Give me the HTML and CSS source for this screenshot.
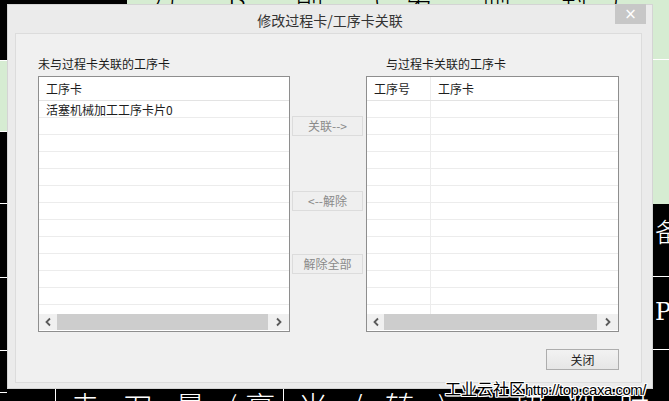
FILE: index.html
```html
<!DOCTYPE html>
<html lang="zh-CN">
<head>
<meta charset="utf-8">
<title>修改过程卡/工序卡关联</title>
<link rel="stylesheet" href="styles.css">
</head>
<body>
<div class="desk">
  <div class="cad-green"></div>
  <div class="cad-top-text">万 ß 削 (第 制 封) 备 / 以</div>
  <div class="cad-line h1"></div>
  <div class="cad-left-green"></div>
  <div class="cad-line lh1"></div>
  <div class="cad-line lh2"></div>
  <div class="cad-line lh3"></div>
  <div class="cad-line rh1"></div>
  <div class="cad-line rh2"></div>
  <div class="cad-line rh3"></div>
  <div class="cad-line v1"></div>
  <div class="cad-line v2"></div>
  <div class="cad-right-text t1">备</div>
  <div class="cad-right-text t2">Pa</div>
  <div class="cad-bottom-text">走 刀 量 (毫 米 / 转 )&nbsp;&nbsp;&nbsp; 切 削 时 间 ( 秒 ) 切 削</div>

  <div class="dialog">
    <div class="titlebar">
      <span class="title">修改过程卡/工序卡关联</span>
      <span class="close-x">×</span>
    </div>
    <div class="client">
      <div class="panes">
        <div class="pane">
          <div class="label">未与过程卡关联的工序卡</div>
          <div class="list">
            <div class="list-head"><div class="cell">工序卡</div></div>
            <div class="list-body">
              <div class="row"><div class="cell">活塞机械加工工序卡片0</div></div>
              <div class="row"></div><div class="row"></div><div class="row"></div>
              <div class="row"></div><div class="row"></div><div class="row"></div>
              <div class="row"></div><div class="row"></div><div class="row"></div>
              <div class="row"></div><div class="row"></div><div class="row"></div>
            </div>
            <div class="hscroll">
              <div class="arrow left"><svg width="8" height="10" viewBox="0 0 8 10"><polyline points="6,1.5 2.5,5 6,8.5" fill="none" stroke="#5a5a5a" stroke-width="1.8"/></svg></div>
              <div class="thumb"></div>
              <div class="arrow right"><svg width="8" height="10" viewBox="0 0 8 10"><polyline points="2,1.5 5.5,5 2,8.5" fill="none" stroke="#5a5a5a" stroke-width="1.8"/></svg></div>
            </div>
          </div>
        </div>

        <div class="actions">
          <div class="btn-dis b1">关联--&gt;</div>
          <div class="btn-dis b2">&lt;--解除</div>
          <div class="btn-dis b3">解除全部</div>
        </div>

        <div class="pane pane-right">
          <div class="label label-right">与过程卡关联的工序卡</div>
          <div class="list">
            <div class="list-head two"><div class="cell c1">工序号</div><div class="cell c2">工序卡</div></div>
            <div class="list-body">
              <div class="row two"><div class="cell c1"></div><div class="cell c2"></div></div>
              <div class="row two"><div class="cell c1"></div><div class="cell c2"></div></div>
              <div class="row two"><div class="cell c1"></div><div class="cell c2"></div></div>
              <div class="row two"><div class="cell c1"></div><div class="cell c2"></div></div>
              <div class="row two"><div class="cell c1"></div><div class="cell c2"></div></div>
              <div class="row two"><div class="cell c1"></div><div class="cell c2"></div></div>
              <div class="row two"><div class="cell c1"></div><div class="cell c2"></div></div>
              <div class="row two"><div class="cell c1"></div><div class="cell c2"></div></div>
              <div class="row two"><div class="cell c1"></div><div class="cell c2"></div></div>
              <div class="row two"><div class="cell c1"></div><div class="cell c2"></div></div>
              <div class="row two"><div class="cell c1"></div><div class="cell c2"></div></div>
              <div class="row two"><div class="cell c1"></div><div class="cell c2"></div></div>
              <div class="row two"><div class="cell c1"></div><div class="cell c2"></div></div>
            </div>
            <div class="hscroll">
              <div class="arrow left r"><svg width="8" height="10" viewBox="0 0 8 10"><polyline points="6,1.5 2.5,5 6,8.5" fill="none" stroke="#5a5a5a" stroke-width="1.8"/></svg></div>
              <div class="thumb"></div>
              <div class="arrow right"><svg width="8" height="10" viewBox="0 0 8 10"><polyline points="2,1.5 5.5,5 2,8.5" fill="none" stroke="#5a5a5a" stroke-width="1.8"/></svg></div>
            </div>
          </div>
        </div>
      </div>
      <div class="footer">
        <div class="btn-close">关闭</div>
      </div>
    </div>
  </div>

  <div class="watermark"><span class="wm-cjk">工业云社区</span><span class="wm-url">http://top.caxa.com/</span></div>
</div>
</body>
</html>
```
FILE: styles.css
```css
html, body {
  margin: 0;
  padding: 0;
  background: #000;
}

.desk {
  position: relative;
  width: 669px;
  height: 401px;
  overflow: hidden;
  background: #000;
  font-family: "Noto Sans CJK SC", "Microsoft YaHei", sans-serif;
  font-size: 12px;
  color: #1e1e1e;
}

/* ---- CAD drawing behind the dialog ---- */
.cad-green {
  position: absolute;
  left: 127px;
  top: 0;
  right: 0;
  height: 204px;
  background: #d6ecd2;
}

.cad-top-text {
  position: absolute;
  left: 150px;
  top: -24px;
  font-size: 28px;
  font-weight: 300;
  color: #000;
  letter-spacing: 22px;
  white-space: nowrap;
}

.cad-left-green {
  position: absolute;
  left: 0;
  top: 60px;
  width: 7px;
  height: 70px;
  background: #d6ecd2;
  border-top: 1px solid #fff;
  border-bottom: 1px solid #fff;
}

.cad-line {
  position: absolute;
  background: #fff;
}
.cad-line.h1 { left: 653px; top: 59px; width: 16px; height: 1px; }
.cad-line.lh1 { left: 0; top: 203px; width: 7px; height: 1px; }
.cad-line.lh2 { left: 0; top: 277px; width: 7px; height: 1px; }
.cad-line.lh3 { left: 0; top: 350px; width: 7px; height: 1px; }
.cad-line.rh1 { left: 653px; top: 276px; width: 16px; height: 1px; }
.cad-line.rh2 { left: 653px; top: 349px; width: 16px; height: 1px; }
.cad-line.rh3 { left: 0; top: 392px; width: 7px; height: 1px; }
.cad-line.v1 { left: 55px; top: 389px; width: 1px; height: 12px; }
.cad-line.v2 { left: 283px; top: 389px; width: 1px; height: 12px; }

.cad-right-text {
  position: absolute;
  left: 655px;
  color: #fff;
  font-size: 26px;
  font-weight: 300;
  line-height: 1;
}
.cad-right-text.t1 { top: 218px; }
.cad-right-text.t2 { top: 300px; font-family: "DejaVu Serif", serif; font-size: 24px; }

.cad-bottom-text {
  position: absolute;
  left: 70px;
  top: 383px;
  color: #fff;
  font-size: 30px;
  font-weight: 300;
  letter-spacing: 8px;
  white-space: nowrap;
}

/* ---- dialog window ---- */
.dialog {
  position: absolute;
  left: 7px;
  top: 4px;
  width: 646px;
  height: 385px;
  box-sizing: border-box;
  background: #ebebeb;
  border: 1px solid #d4d4d4;
  display: flex;
  flex-direction: column;
}

.titlebar {
  position: relative;
  height: 28px;
  flex: none;
  display: flex;
  align-items: center;
  justify-content: center;
}

.title {
  font-size: 14px;
  color: #333;
  margin-top: 2px;
}

.close-x {
  position: absolute;
  right: 6px;
  top: -1px;
  width: 31px;
  height: 20px;
  background: #c7c7c7;
  color: #fff;
  font-family: "DejaVu Sans", sans-serif;
  font-size: 15px;
  line-height: 20px;
  text-align: center;
}

.client {
  flex: 1;
  margin: 0 10px 5px 7px;
  background: #f0f0f0;
  border: 1px solid #dcdcdc;
  display: flex;
  flex-direction: column;
  padding: 22px 22px 0 22px;
}

.panes {
  display: flex;
}

.pane {
  width: 252px;
  display: flex;
  flex-direction: column;
}

.pane-right {
  width: 253px;
}

.label {
  height: 16px;
  line-height: 16px;
  margin-bottom: 4px;
  color: #1a1a1a;
  white-space: nowrap;
}

.label-right {
  padding-left: 20px;
}

.list {
  height: 256px;
  box-sizing: border-box;
  border: 1px solid #8e8e8e;
  background: #fff;
  display: flex;
  flex-direction: column;
  padding-bottom: 1px;
}

.list-head {
  height: 23px;
  flex: none;
  border-bottom: 1px solid #e3e3e3;
  display: flex;
  align-items: center;
}

.list-head .cell {
  padding-left: 7px;
  line-height: 23px;
}

.list-body {
  flex: 1;
  overflow: hidden;
}

.row {
  height: 16px;
  border-bottom: 1px solid #ececec;
  display: flex;
}

.row .cell {
  padding-left: 7px;
  line-height: 18px;
  white-space: nowrap;
}

.list-head.two .cell,
.row.two .cell {
  height: 100%;
}

.cell.c1 {
  width: 56px;
  flex: none;
  border-right: 1px solid #ececec;
}

.cell.c2 {
  flex: 1;
}

.hscroll {
  height: 16px;
  flex: none;
  display: flex;
  background: #f0f0f0;
}

.arrow {
  display: flex;
  align-items: center;
  justify-content: center;
  flex: none;
}
.arrow.left { width: 18px; }
.arrow.left.r { width: 17px; }
.arrow.right { width: 21px; }

.thumb {
  flex: 1;
  background: #cdcdcd;
}

/* ---- middle buttons ---- */
.actions {
  width: 76px;
  flex: none;
  display: flex;
  flex-direction: column;
  padding-top: 60px;
  box-sizing: border-box;
}

.btn-dis {
  margin-left: 2px;
  width: 71px;
  height: 20px;
  box-sizing: border-box;
  background: #efefef;
  border: 1px solid #dcdcdc;
  color: #8a8a8a;
  text-align: center;
  line-height: 18px;
}
.btn-dis.b2 { margin-top: 55px; }
.btn-dis.b3 { margin-top: 43px; }

/* ---- footer ---- */
.footer {
  display: flex;
  justify-content: flex-end;
  margin-top: 17px;
}

.btn-close {
  width: 73px;
  height: 21px;
  box-sizing: border-box;
  border: 1px solid #adadad;
  background: linear-gradient(#f2f2f2, #e6e6e6);
  color: #222;
  text-align: center;
  line-height: 19px;
}

/* ---- watermark ---- */
.watermark {
  position: absolute;
  left: 445px;
  top: 376px;
  color: #000;
  white-space: nowrap;
  text-shadow: 1px 0 0 #fff, -1px 0 0 #fff, 0 1px 0 #fff, 0 -1px 0 #fff,
               1px 1px 0 #fff, -1px -1px 0 #fff, 1px -1px 0 #fff, -1px 1px 0 #fff;
}

.wm-cjk {
  font-size: 16px;
}

.wm-url {
  font-family: "Liberation Sans", Arial, sans-serif;
  font-size: 15px;
  letter-spacing: -0.5px;
}
```
